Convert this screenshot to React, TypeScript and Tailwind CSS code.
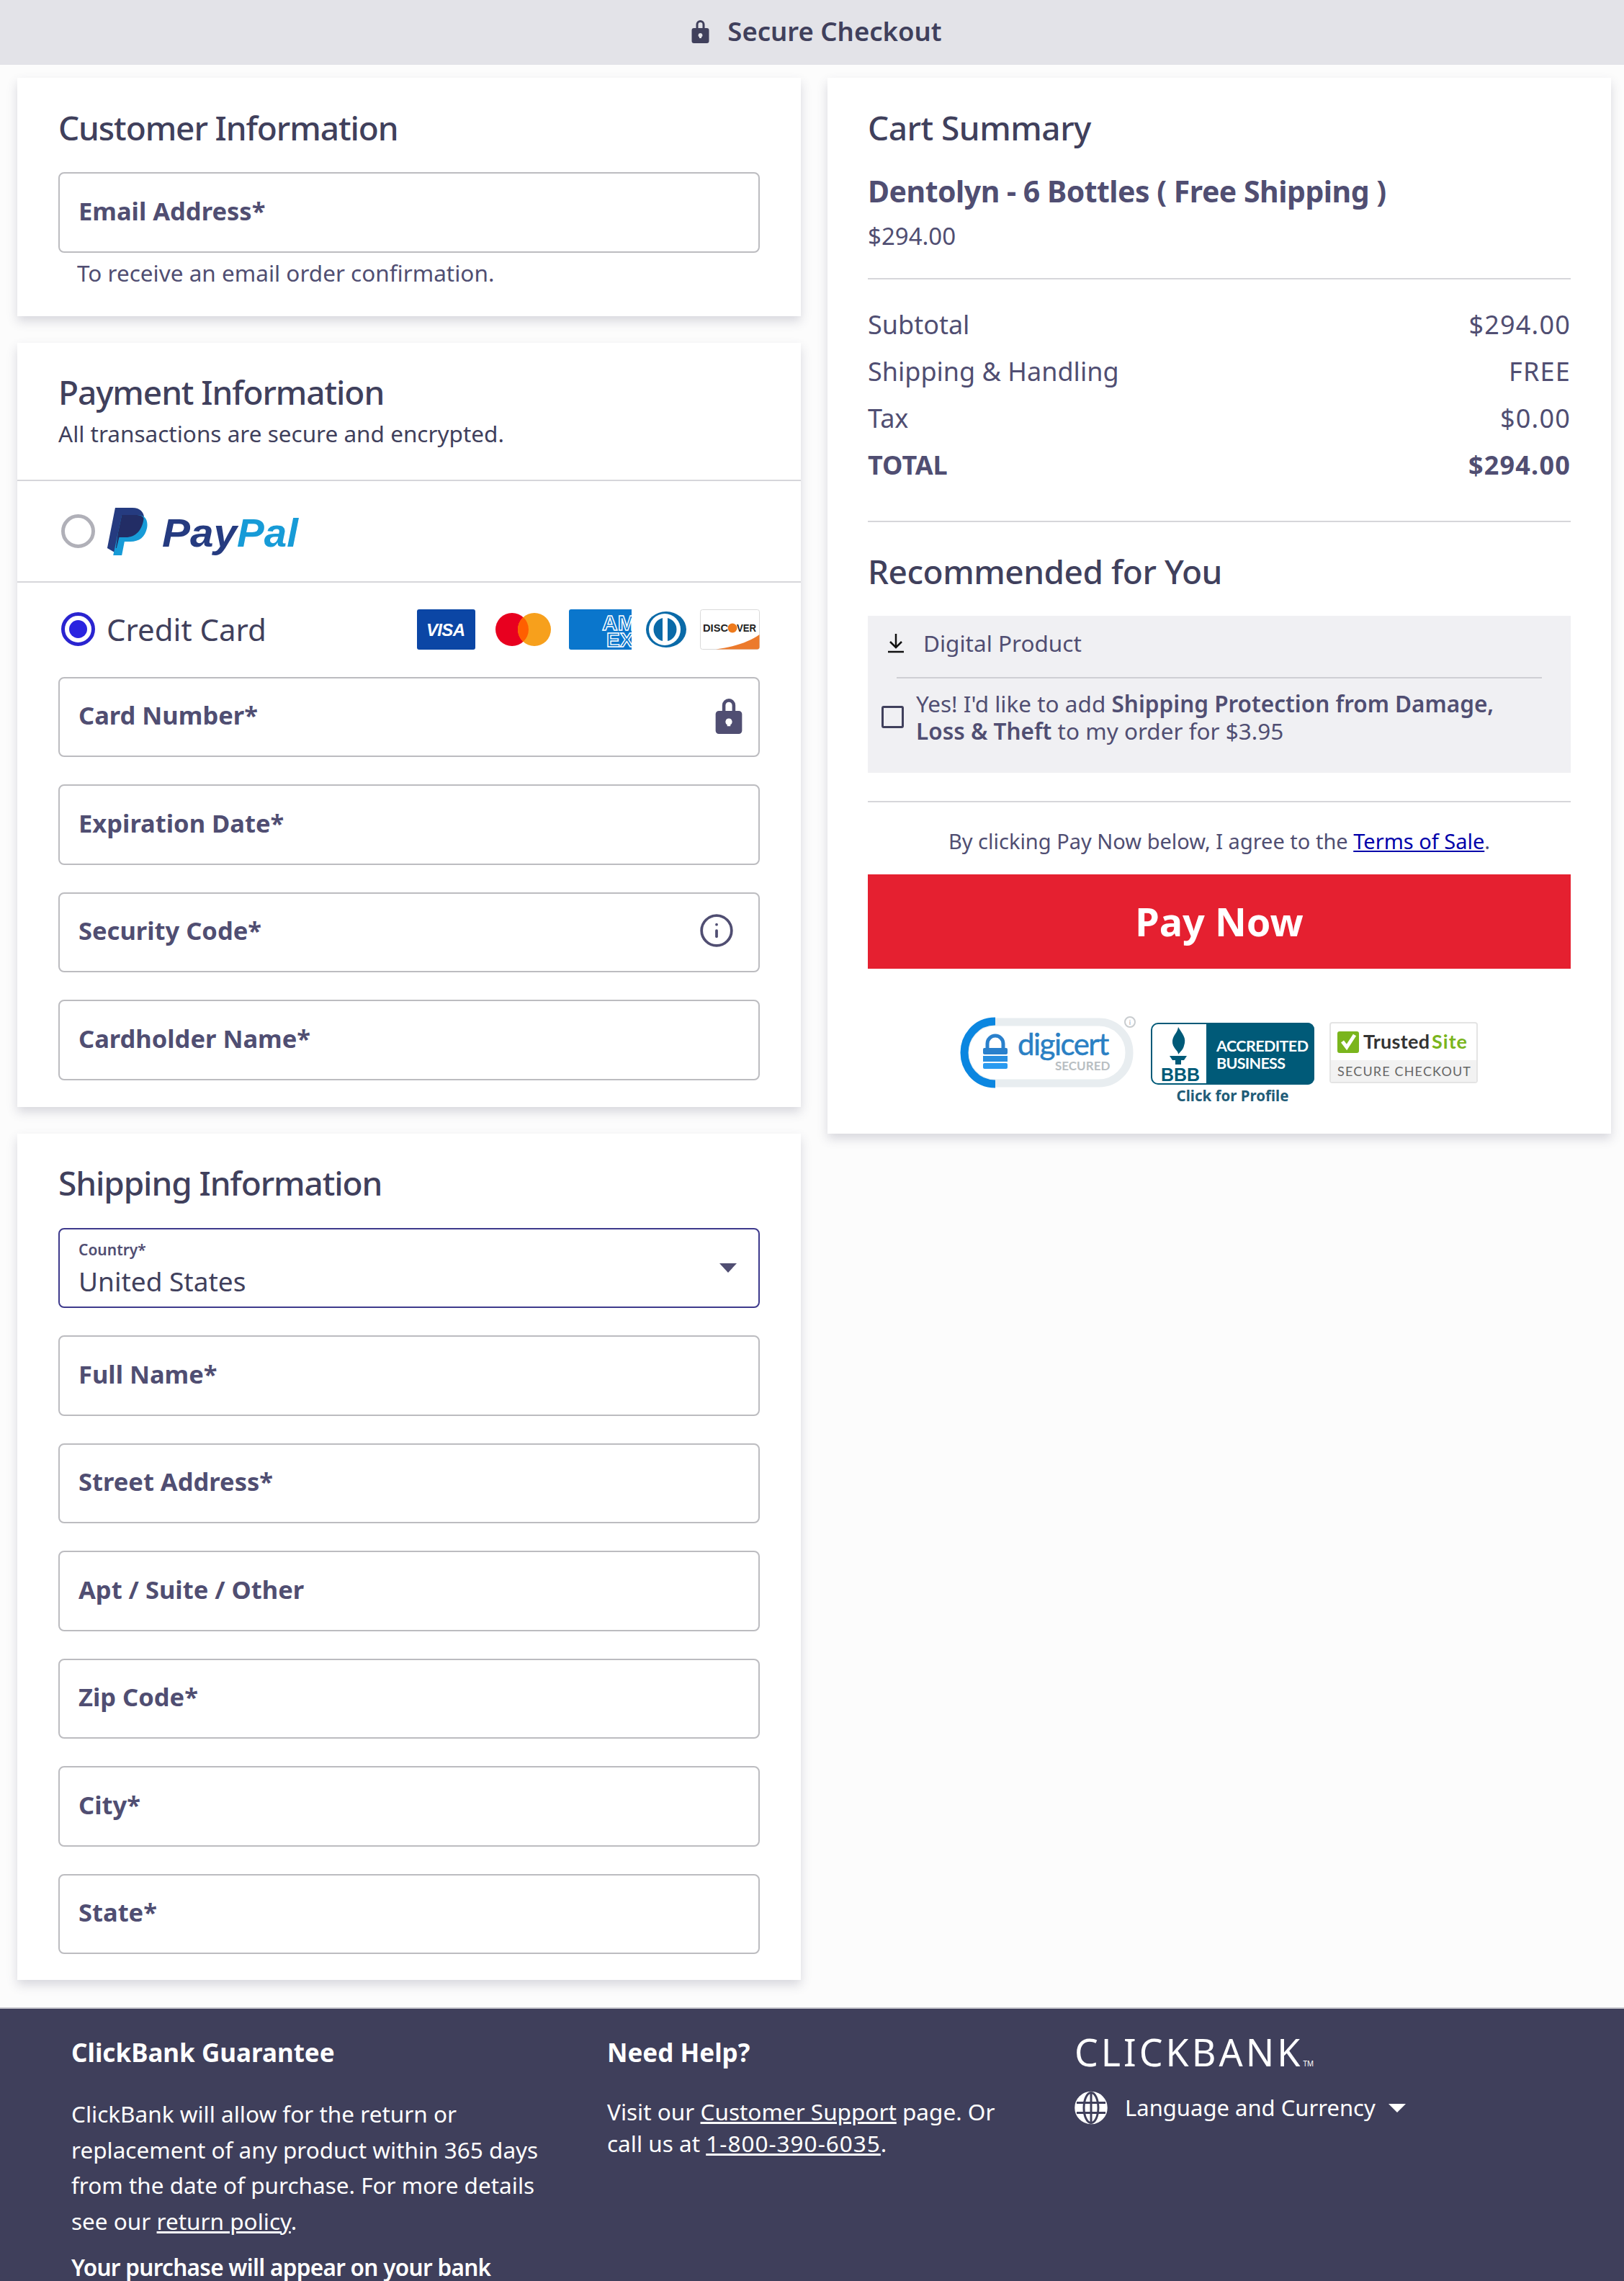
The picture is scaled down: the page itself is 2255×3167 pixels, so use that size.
import { Info } from "lucide-react";

function LockIcon({ className }: { className: string }) {
  return (
    <svg viewBox="0 0 24 34" className={className} fill="currentColor">
      <path fillRule="evenodd" d="M6 13V8a6 6 0 0 1 12 0v5h3a3 3 0 0 1 3 3v15a3 3 0 0 1-3 3H3a3 3 0 0 1-3-3V16a3 3 0 0 1 3-3h3Zm3 0h6V8a3 3 0 0 0-6 0v5Zm3 7a3 3 0 0 0-1.500 5.600V27h3v-1.400A3 3 0 0 0 12 20Z" />
    </svg>
  );
}

function Card({ children, className = "" }: { children: React.ReactNode; className?: string }) {
  return (
    <section className={`bg-white shadow-[0_7px_14px_rgba(70,70,100,0.2)] ${className}`}>
      {children}
    </section>
  );
}

function CardTitle({ children, tight }: { children: React.ReactNode; tight?: boolean }) {
  return (
    <h2 className={`text-[46px] leading-[56px] font-medium text-[#40405c] ${tight ? "tracking-[-1.1px]" : "tracking-[-0.5px]"}`}>
      {children}
    </h2>
  );
}

function Field({ label, icon }: { label: string; icon?: React.ReactNode }) {
  return (
    <div className="h-[111.5px] border-2 border-[#bcbcc0] rounded-lg flex items-center justify-between pl-[26px] pr-[22px] pb-[4px]">
      <span className="text-[34.5px] font-bold text-[#504e72]">{label}</span>
      {icon}
    </div>
  );
}

function Radio({ checked }: { checked?: boolean }) {
  return checked ? (
    <span className="w-[47px] h-[47px] rounded-full border-[5px] border-[#2a24d0] flex items-center justify-center shrink-0">
      <span className="w-[25px] h-[25px] rounded-full bg-[#2a24e0]" />
    </span>
  ) : (
    <span className="w-[47px] h-[47px] rounded-full border-[5px] border-[#b0b0b8] shrink-0" />
  );
}

function PayPalLogo() {
  return (
    <svg viewBox="0 0 270 68" className="w-[270px] h-[68px] ml-[16px]">
      <g transform="scale(0.92 1)">
        <path d="M13 2h26c14 0 20 9 17 21-3 13-13 20-27 20H19l-5 22H14L1 58 13 2Z" fill="#253b80" />
        <path d="M23 12h24c11 0 16 7 14 18-3 13-12 19-25 19h-9l-4 19H10l13-56Z" fill="#179bd7" />
        <path d="M23 12h23c6 0 10 3 10 5-2 16-12 26-27 26h-10l-4 15-1 0L17 38 23 12Z" fill="#222d65" />
      </g>
      <text x="77" y="56" fontFamily="Liberation Sans, sans-serif" fontStyle="italic" fontWeight="700" fontSize="56" fill="#253b80" textLength="104" lengthAdjust="spacingAndGlyphs">Pay</text>
      <text x="181" y="56" fontFamily="Liberation Sans, sans-serif" fontStyle="italic" fontWeight="700" fontSize="56" fill="#179bd7" textLength="85" lengthAdjust="spacingAndGlyphs">Pal</text>
    </svg>
  );
}

function CardLogos() {
  return (
    <div className="flex items-center">
      <svg viewBox="0 0 81 56" className="w-[81px] h-[56px]">
        <rect width="81" height="56" rx="3" fill="#0b46a5" />
        <text x="40" y="37" textAnchor="middle" fontFamily="Liberation Sans, sans-serif" fontStyle="italic" fontWeight="700" fontSize="24" fill="#fff" textLength="54">VISA</text>
      </svg>
      <svg viewBox="0 0 77 46" className="w-[77px] h-[46px] ml-[28px]">
        <circle cx="23" cy="23" r="23" fill="#e8001f" />
        <circle cx="54" cy="23" r="23" fill="#f7a01c" />
        <path d="M38.500 6a23 23 0 0 1 0 34 23 23 0 0 1 0-34Z" fill="#ff5f00" />
      </svg>
      <svg viewBox="0 0 87 56" className="w-[87px] h-[56px] ml-[25px]">
        <path d="M3 0h84v56H3a3 3 0 0 1-3-3V3a3 3 0 0 1 3-3Z" fill="#0a76cc" />
        <text x="46" y="29" fontFamily="Liberation Sans, sans-serif" fontWeight="700" fontSize="30" fill="#0a76cc" stroke="#fff" strokeWidth="1.400">AM</text>
        <text x="52" y="52" fontFamily="Liberation Sans, sans-serif" fontWeight="700" fontSize="28" fill="#0a76cc" stroke="#fff" strokeWidth="1.400">EX</text>
      </svg>
      <svg viewBox="0 0 56 50" className="w-[56px] h-[50px] ml-[20px]">
        <ellipse cx="28" cy="25" rx="28" ry="25" fill="#0a6aa8" />
        <circle cx="26" cy="25" r="22" fill="#fff" />
        <path d="M23 9v32a16.500 16.500 0 0 1 0-32ZM30 9a16.500 16.500 0 0 1 0 32V9Z" fill="#0a6aa8" />
      </svg>
      <svg viewBox="0 0 83 56" className="w-[83px] h-[56px] ml-[19px]">
        <rect x="0.500" y="0.500" width="82" height="55" rx="3" fill="#fff" stroke="#d9d9d9" />
        <path d="M22 55.500C50 52 70 44 82.500 35v17a3 3 0 0 1-3 3.500Z" fill="#ec7a2c" />
        <text x="4" y="31" fontFamily="Liberation Sans, sans-serif" fontWeight="700" fontSize="15" fill="#222" textLength="35" lengthAdjust="spacingAndGlyphs">DISC</text>
        <text x="51" y="31" fontFamily="Liberation Sans, sans-serif" fontWeight="700" fontSize="15" fill="#222" textLength="27" lengthAdjust="spacingAndGlyphs">VER</text>
        <circle cx="45" cy="26" r="6.500" fill="#ee7a1c" />
      </svg>
    </div>
  );
}

function TrustBadges() {
  return (
    <div className="flex items-start justify-center mt-[68px]">
      <svg viewBox="0 0 240 97" className="w-[240px] h-[97px] overflow-visible">
        <rect x="6" y="6" width="228" height="85" rx="42" fill="#fff" stroke="#e8edf0" strokeWidth="11" />
        <path d="M48 5C20 5 5 28 5 48.500S20 92 48 92" fill="none" stroke="#0b86e0" strokeWidth="11" />
        <path d="M37 44v-8a11 11 0 0 1 22 0v8" fill="none" stroke="#2a80cc" strokeWidth="5" />
        <rect x="31" y="42" width="34" height="9" rx="2" fill="#2a80cc" />
        <rect x="31" y="53" width="34" height="8" fill="#2a8fe0" />
        <rect x="31" y="63" width="34" height="8" rx="2" fill="#2a9af0" />
        <text x="79" y="52" fontFamily="Lato, sans-serif" fontSize="42" fill="#2a80c4" stroke="#2a80c4" strokeWidth="0.500" letterSpacing="-1.500">digicert</text>
        <text x="131" y="73" fontFamily="Lato, sans-serif" fontWeight="700" fontSize="17" fill="#b8bec2">SECURED</text>
        <circle cx="235" cy="6" r="7" fill="#fff" stroke="#c8cccf" strokeWidth="2" />
        <text x="235" y="10" textAnchor="middle" fontFamily="Lato, sans-serif" fontSize="10" fill="#a8acaf">i</text>
      </svg>
      <div className="ml-[24px] mt-[7px] flex flex-col items-center">
        <svg viewBox="0 0 227 86" className="w-[227px] h-[86px]">
          <rect x="1" y="1" width="225" height="84" rx="9" fill="#fff" stroke="#005a78" strokeWidth="2" />
          <path d="M77 0h141a9 9 0 0 1 9 9v68a9 9 0 0 1-9 9H77V0Z" fill="#005a78" />
          <path d="M38 6c6 10 12 15 8 26-1 5-5 8-8 12 1-5-9-9-8-19 1-8 7-11 8-19Z" fill="#005a78" />
          <path d="M26 46h24l-4 6h-4v6H34v-6h-4l-4-6Z" fill="#005a78" />
          <text x="14" y="81" fontFamily="Liberation Sans, sans-serif" fontWeight="700" fontSize="25" fill="#005a78" textLength="54" lengthAdjust="spacingAndGlyphs">BBB</text>
          <text x="91" y="40" fontFamily="Lato, sans-serif" fontWeight="700" fontSize="21.500" fill="#fff" textLength="128">ACCREDITED</text>
          <text x="91" y="64" fontFamily="Lato, sans-serif" fontWeight="700" fontSize="21.500" fill="#fff" textLength="96">BUSINESS</text>
        </svg>
        <span className="text-[20.5px] leading-[24px] mt-[3px] font-bold text-[#1f5c78]">Click for Profile</span>
      </div>
      <svg viewBox="0 0 206 85" className="w-[206px] h-[85px] ml-[21px] mt-[6px]">
        <rect x="1" y="1" width="204" height="83" rx="3" fill="#fff" stroke="#e4e4e4" strokeWidth="2" />
        <path d="M2 53h202v28a2 2 0 0 1-2 2H4a2 2 0 0 1-2-2V53Z" fill="#f2f2f2" />
        <rect x="11" y="13" width="30" height="30" rx="3" fill="#7ab51d" />
        <path d="M18 27l6 8 11-17" fill="none" stroke="#fff" strokeWidth="5" />
        <text x="47" y="37" fontFamily="Lato, sans-serif" fontWeight="700" fontSize="27" fill="#333" textLength="92">Trusted</text>
        <text x="142" y="37" fontFamily="Lato, sans-serif" fontWeight="700" fontSize="27" fill="#7ab51d" textLength="49">Site</text>
        <text x="11" y="75" fontFamily="Lato, sans-serif" fontSize="18" fill="#666" textLength="185">SECURE CHECKOUT</text>
      </svg>
    </div>
  );
}

function SummaryRow({ label, value, bold }: { label: string; value: string; bold?: boolean }) {
  return (
    <div className={`flex justify-between text-[36px] leading-[48px] text-[#504e72] ${bold ? "font-bold" : ""}`}>
      <span>{label}</span>
      <span className="tracking-[1.2px]">{value}</span>
    </div>
  );
}

function GlobeIcon() {
  return (
    <svg viewBox="0 0 46 46" className="w-[46px] h-[47px]" fill="none" stroke="#fff" strokeWidth="3.500">
      <circle cx="23" cy="23" r="21" fill="#fff" />
      <ellipse cx="23" cy="23" rx="10" ry="21" stroke="#3f3f5b" strokeWidth="3" />
      <path d="M23 2v42M3 16h40M3 30h40" stroke="#3f3f5b" strokeWidth="3" />
    </svg>
  );
}

export default function App() {
  return (
    <div className="h-[3167px] overflow-hidden bg-[#fcfcfc] font-['Noto_Sans',sans-serif] text-[#504e72]">
      <header className="h-[90px] bg-[#e3e3e8] flex items-center justify-center gap-[24px] pb-[4px] pl-[12px]">
        <LockIcon className="w-[27px] h-[34px] text-[#40405c]" />
        <span className="text-[36.5px] font-semibold text-[#40405c]">Secure Checkout</span>
      </header>

      <main className="flex items-start gap-[37px] pl-[24px] pr-[18px] pt-[18px] pb-[38px]">
        <div className="w-[1088px] flex flex-col gap-[37px]">
          <Card className="px-[57px] pt-[41px] pb-[40px]">
            <CardTitle tight>Customer Information</CardTitle>
            <div className="mt-[34px]">
              <Field label="Email Address*" />
            </div>
            <p className="mt-[8px] pl-[26px] text-[31.5px] leading-[40px]">To receive an email order confirmation.</p>
          </Card>

          <Card className="pb-[37px]">
            <div className="px-[57px] pt-[40px] pb-[44px] border-b-2 border-[#d6d6da]">
              <CardTitle tight>Payment Information</CardTitle>
              <p className="mt-[10px] text-[31.5px] leading-[40px] text-[#40405c]">All transactions are secure and encrypted.</p>
            </div>
            <div className="h-[141px] px-[61px] flex items-center border-b-2 border-[#d6d6da]">
              <Radio />
              <PayPalLogo />
            </div>
            <div className="px-[57px]">
              <div className="h-[56px] mt-[37px] flex items-center justify-between">
                <div className="flex items-center gap-[16px] pl-[4px]">
                  <Radio checked />
                  <span className="text-[42px] text-[#40405c]">Credit Card</span>
                </div>
                <CardLogos />
              </div>
              <div className="mt-[38px] flex flex-col gap-[38px]">
                <Field label="Card Number*" icon={<LockIcon className="w-[38px] h-[52px] text-[#504e72]" />} />
                <Field label="Expiration Date*" />
                <Field label="Security Code*" icon={<Info className="w-[50px] h-[50px] mr-[11px] text-[#504e72]" strokeWidth={1.8} />} />
                <Field label="Cardholder Name*" />
              </div>
            </div>
          </Card>

          <Card className="px-[57px] pt-[40px] pb-[36px]">
            <CardTitle tight>Shipping Information</CardTitle>
            <div className="mt-[35px] flex flex-col gap-[38px]">
              <div className="h-[111.5px] border-2 border-[#3e3a8c] rounded-lg flex items-center justify-between pl-[26px] pr-[30px]">
                <div>
                  <div className="text-[21px] leading-[28px] font-semibold mt-[2px]">Country*</div>
                  <div className="text-[37px] leading-[46px] mt-[7px] text-[#40405c]">United States</div>
                </div>
                <span className="w-0 h-0 border-l-[12px] border-r-[12px] border-t-[13px] border-l-transparent border-r-transparent border-t-[#504e72]" />
              </div>
              <Field label="Full Name*" />
              <Field label="Street Address*" />
              <Field label="Apt / Suite / Other" />
              <Field label="Zip Code*" />
              <Field label="City*" />
              <Field label="State*" />
            </div>
          </Card>
        </div>

        <Card className="w-[1088px] px-[56px] pt-[41px] pb-[41px]">
          <CardTitle>Cart Summary</CardTitle>
          <h3 className="mt-[35px] text-[41px] leading-[50px] font-bold tracking-[-0.5px]">Dentolyn - 6 Bottles ( Free Shipping )</h3>
          <p className="mt-[18px] text-[33px] leading-[40px]">$294.00</p>
          <hr className="mt-[38px] border-t-2 border-[#d6d6da]" />
          <div className="mt-[39px] flex flex-col gap-[17px]">
            <SummaryRow label="Subtotal" value="$294.00" />
            <SummaryRow label="Shipping & Handling" value="FREE" />
            <SummaryRow label="Tax" value="$0.00" />
            <SummaryRow label="TOTAL" value="$294.00" bold />
          </div>
          <hr className="mt-[53px] border-t-2 border-[#d6d6da]" />
          <div className="mt-[40px]">
            <CardTitle>Recommended for You</CardTitle>
          </div>
          <div className="mt-[34px] bg-[#f0f0f3] pt-[18px] pb-[40px]">
            <div className="flex items-center pl-[28px] text-[31.5px] leading-[40px]">
              <svg viewBox="0 0 22 28" className="w-[22px] h-[28px]" fill="none" stroke="#111" strokeWidth="2.500">
                <path d="M11 1v18M3 12l8 8 8-8M0 26h22" />
              </svg>
              <span className="ml-[27px]">Digital Product</span>
            </div>
            <hr className="mt-[27px] mx-[40px] border-t-2 border-[#cfcfd4]" />
            <div className="mt-[16px] flex items-center pl-[19px] pr-[80px]">
              <span className="w-[31px] h-[31px] border-[3px] border-[#40405c] rounded-[3px] shrink-0" />
              <p className="ml-[17px] text-[31.5px] leading-[37.5px]">
                Yes! I'd like to add <b className="font-semibold">Shipping Protection from Damage, Loss &amp; Theft</b> to my order for $3.95
              </p>
            </div>
          </div>
          <hr className="mt-[39px] border-t-2 border-[#d6d6da]" />
          <p className="mt-[34px] text-center text-[29px] leading-[40px]">
            By clicking Pay Now below, I agree to the <a href="#" className="text-[#0000aa] underline">Terms of Sale</a>.
          </p>
          <button className="mt-[26px] w-full h-[131px] bg-[#e52030] text-white text-[54px] font-bold">Pay Now</button>
          <TrustBadges />
        </Card>
      </main>

      <footer className="h-[400px] bg-[#3f3f5b] border-t-2 border-[#c9c9cf] flex text-white">
        <div className="w-[843px] pl-[99px] pt-[36px]">
          <h4 className="text-[35px] leading-[50px] font-bold">ClickBank Guarantee</h4>
          <p className="mt-[35px] w-[670px] text-[31.5px] leading-[49.500px]">
            ClickBank will allow for the return or replacement of any product within 365 days from the date of purchase. For more details see our <a href="#" className="underline">return policy</a>.
          </p>
          <p className="mt-[15px] text-[31.5px] leading-[49.500px] font-semibold tracking-[-0.7px]">Your purchase will appear on your bank</p>
        </div>
        <div className="w-[649px] pt-[36px]">
          <h4 className="text-[35px] leading-[50px] font-bold">Need Help?</h4>
          <p className="mt-[35px] w-[560px] text-[31.5px] leading-[44px]">
            Visit our <a href="#" className="underline">Customer Support</a> page. Or call us at <a href="#" className="underline tracking-[1px]">1-800-390-6035</a>.
          </p>
        </div>
        <div className="pt-[30px]">
          <div className="text-[52px] leading-[60px] tracking-[4px]">CLICKBANK<span className="text-[10px] tracking-normal align-baseline">TM</span></div>
          <div className="mt-[8px] flex items-center">
            <GlobeIcon />
            <span className="ml-[24px] text-[31px]">Language and Currency</span>
            <span className="ml-[18px] w-0 h-0 border-l-[12px] border-r-[12px] border-t-[12px] border-l-transparent border-r-transparent border-t-white" />
          </div>
        </div>
      </footer>
    </div>
  );
}
